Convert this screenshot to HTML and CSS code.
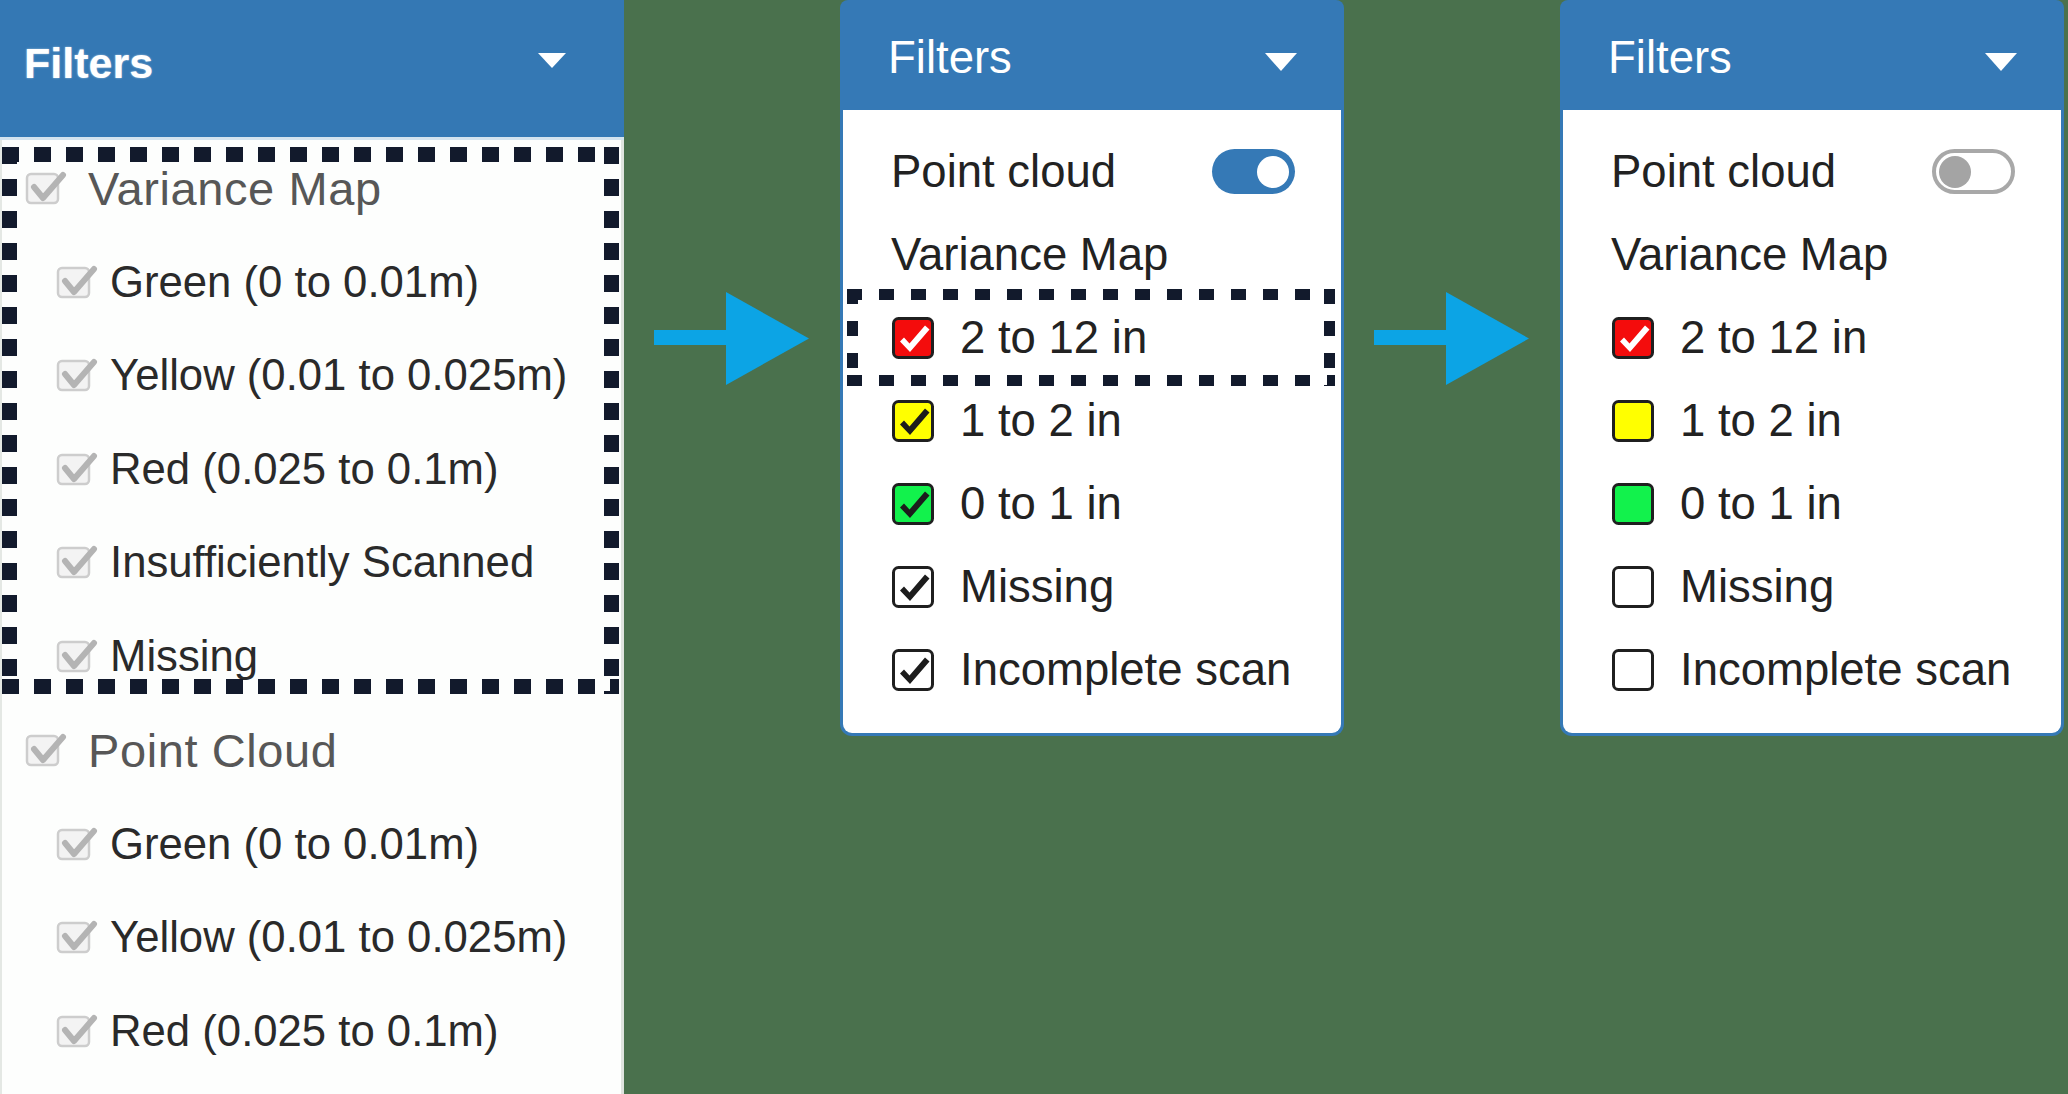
FILE: index.html
```html
<!DOCTYPE html>
<html>
<head>
<meta charset="utf-8">
<title>Filters</title>
<link rel="stylesheet" href="styles.css">
</head>
<body>
<div class="canvas">
  <aside class="old-panel">
    <div class="old-header">
      <span class="old-title">Filters</span>
      <span class="caret caret-sm"></span>
    </div>
    <div class="old-body">
      <div class="old-group dashed">
        <div class="old-row top"><svg class="gcb" viewBox="0 0 42 34"><rect class="gbox" x="2" y="3" width="31" height="29" rx="4"/><path class="gchk" d="M9 16 L18 27 L38 4"/></svg><span>Variance Map</span></div>
        <div class="old-row sub"><svg class="gcb" viewBox="0 0 42 34"><rect class="gbox" x="2" y="3" width="31" height="29" rx="4"/><path class="gchk" d="M9 16 L18 27 L38 4"/></svg><span>Green (0 to 0.01m)</span></div>
        <div class="old-row sub"><svg class="gcb" viewBox="0 0 42 34"><rect class="gbox" x="2" y="3" width="31" height="29" rx="4"/><path class="gchk" d="M9 16 L18 27 L38 4"/></svg><span>Yellow (0.01 to 0.025m)</span></div>
        <div class="old-row sub"><svg class="gcb" viewBox="0 0 42 34"><rect class="gbox" x="2" y="3" width="31" height="29" rx="4"/><path class="gchk" d="M9 16 L18 27 L38 4"/></svg><span>Red (0.025 to 0.1m)</span></div>
        <div class="old-row sub"><svg class="gcb" viewBox="0 0 42 34"><rect class="gbox" x="2" y="3" width="31" height="29" rx="4"/><path class="gchk" d="M9 16 L18 27 L38 4"/></svg><span>Insufficiently Scanned</span></div>
        <div class="old-row sub"><svg class="gcb" viewBox="0 0 42 34"><rect class="gbox" x="2" y="3" width="31" height="29" rx="4"/><path class="gchk" d="M9 16 L18 27 L38 4"/></svg><span>Missing</span></div>
      </div>
      <div class="old-group second">
        <div class="old-row top"><svg class="gcb" viewBox="0 0 42 34"><rect class="gbox" x="2" y="3" width="31" height="29" rx="4"/><path class="gchk" d="M9 16 L18 27 L38 4"/></svg><span>Point Cloud</span></div>
        <div class="old-row sub"><svg class="gcb" viewBox="0 0 42 34"><rect class="gbox" x="2" y="3" width="31" height="29" rx="4"/><path class="gchk" d="M9 16 L18 27 L38 4"/></svg><span>Green (0 to 0.01m)</span></div>
        <div class="old-row sub"><svg class="gcb" viewBox="0 0 42 34"><rect class="gbox" x="2" y="3" width="31" height="29" rx="4"/><path class="gchk" d="M9 16 L18 27 L38 4"/></svg><span>Yellow (0.01 to 0.025m)</span></div>
        <div class="old-row sub"><svg class="gcb" viewBox="0 0 42 34"><rect class="gbox" x="2" y="3" width="31" height="29" rx="4"/><path class="gchk" d="M9 16 L18 27 L38 4"/></svg><span>Red (0.025 to 0.1m)</span></div>
      </div>
    </div>
  </aside>

  <div class="arrow-slot first">
    <svg class="arrow" viewBox="0 0 156 94"><rect x="0" y="38" width="76" height="15"/><polygon points="72,0 72,93 155,46.5"/></svg>
  </div>

  <section class="panel">
    <div class="panel-header">
      <span class="panel-title">Filters</span>
      <span class="caret caret-lg"></span>
    </div>
    <div class="panel-body">
      <div class="row"><span>Point cloud</span><span class="toggle on"><span class="knob"></span></span></div>
      <div class="row"><span>Variance Map</span></div>
      <div class="row check highlight"><svg class="cb red" viewBox="0 0 42 42"><rect class="box" x="1.5" y="1.5" width="39" height="39" rx="5"/><path class="chk white" d="M8 24.5 L12 20.5 L17.5 26.5 L33 8.5 L37.5 12.5 L18 35 Z"/></svg><span>2 to 12 in</span></div>
      <div class="row check"><svg class="cb yellow" viewBox="0 0 42 42"><rect class="box" x="1.5" y="1.5" width="39" height="39" rx="5"/><path class="chk" d="M8 24.5 L12 20.5 L17.5 26.5 L33 8.5 L37.5 12.5 L18 35 Z"/></svg><span>1 to 2 in</span></div>
      <div class="row check"><svg class="cb green" viewBox="0 0 42 42"><rect class="box" x="1.5" y="1.5" width="39" height="39" rx="5"/><path class="chk" d="M8 24.5 L12 20.5 L17.5 26.5 L33 8.5 L37.5 12.5 L18 35 Z"/></svg><span>0 to 1 in</span></div>
      <div class="row check"><svg class="cb plain" viewBox="0 0 42 42"><rect class="box" x="1.5" y="1.5" width="39" height="39" rx="5"/><path class="chk" d="M8 24.5 L12 20.5 L17.5 26.5 L33 8.5 L37.5 12.5 L18 35 Z"/></svg><span>Missing</span></div>
      <div class="row check"><svg class="cb plain" viewBox="0 0 42 42"><rect class="box" x="1.5" y="1.5" width="39" height="39" rx="5"/><path class="chk" d="M8 24.5 L12 20.5 L17.5 26.5 L33 8.5 L37.5 12.5 L18 35 Z"/></svg><span>Incomplete scan</span></div>
    </div>
  </section>

  <div class="arrow-slot second">
    <svg class="arrow" viewBox="0 0 156 94"><rect x="0" y="38" width="76" height="15"/><polygon points="72,0 72,93 155,46.5"/></svg>
  </div>

  <section class="panel">
    <div class="panel-header">
      <span class="panel-title">Filters</span>
      <span class="caret caret-lg"></span>
    </div>
    <div class="panel-body">
      <div class="row"><span>Point cloud</span><span class="toggle off"><span class="knob"></span></span></div>
      <div class="row"><span>Variance Map</span></div>
      <div class="row check"><svg class="cb red" viewBox="0 0 42 42"><rect class="box" x="1.5" y="1.5" width="39" height="39" rx="5"/><path class="chk white" d="M8 24.5 L12 20.5 L17.5 26.5 L33 8.5 L37.5 12.5 L18 35 Z"/></svg><span>2 to 12 in</span></div>
      <div class="row check"><svg class="cb yellow" viewBox="0 0 42 42"><rect class="box" x="1.5" y="1.5" width="39" height="39" rx="5"/></svg><span>1 to 2 in</span></div>
      <div class="row check"><svg class="cb green" viewBox="0 0 42 42"><rect class="box" x="1.5" y="1.5" width="39" height="39" rx="5"/></svg><span>0 to 1 in</span></div>
      <div class="row check"><svg class="cb plain" viewBox="0 0 42 42"><rect class="box" x="1.5" y="1.5" width="39" height="39" rx="5"/></svg><span>Missing</span></div>
      <div class="row check"><svg class="cb plain" viewBox="0 0 42 42"><rect class="box" x="1.5" y="1.5" width="39" height="39" rx="5"/></svg><span>Incomplete scan</span></div>
    </div>
  </section>
</div>
</body>
</html>
```

FILE: styles.css
```css
html, body {
  margin: 0;
  padding: 0;
}

body {
  width: 2068px;
  height: 1094px;
  overflow: hidden;
  background: #4a714d;
  font-family: "Liberation Sans", Arial, sans-serif;
}

.canvas {
  display: flex;
  align-items: flex-start;
  height: 1094px;
}

/* ---------- old panel (left) ---------- */
.old-panel {
  flex: none;
  width: 624px;
  height: 1094px;
  background: #fdfefd;
  box-shadow: inset -3px 0 0 #dfe4df, inset 2px 0 0 #e4e8e4;
}

.old-header {
  height: 140px;
  box-sizing: border-box;
  background: #3478b4;
  border-bottom: 3px solid #d3e3ef;
  display: flex;
  align-items: flex-start;
  padding: 42px 0 0 24px;
}

.old-title {
  font-size: 43px;
  line-height: 43px;
  font-weight: bold;
  color: #fff;
  text-shadow: 0 0 2px rgba(255, 255, 255, 0.6);
}

.caret {
  width: 0;
  height: 0;
  margin-left: auto;
  border-style: solid;
  border-color: #fff transparent transparent transparent;
}

.caret-sm {
  margin-top: 11px;
  margin-right: 58px;
  border-width: 15px 14px 0 14px;
}

.old-body {
  padding-top: 7px;
}

.old-group {
  position: relative;
  margin-left: 2px;
  width: 617px;
  display: flex;
  flex-direction: column;
  gap: 33.5px;
}

.old-group.dashed {
  padding: 11px 0 8px;
}

.old-group.second {
  margin-top: 26.5px;
}

.dashed::after {
  content: "";
  position: absolute;
  inset: 0;
  pointer-events: none;
  background:
    linear-gradient(90deg, #121a2c 17px, transparent 17px) left top / 32px 15px repeat-x,
    linear-gradient(90deg, #121a2c 17px, transparent 17px) left bottom / 32px 15px repeat-x,
    linear-gradient(180deg, #121a2c 17px, transparent 17px) left top / 15px 32px repeat-y,
    linear-gradient(180deg, #121a2c 17px, transparent 17px) right top / 15px 32px repeat-y;
}

.old-row {
  height: 60px;
  display: flex;
  align-items: center;
  white-space: nowrap;
}

.old-row.top {
  padding-left: 23px;
  font-size: 47px;
  line-height: 47px;
  color: #575757;
  letter-spacing: 0.6px;
  gap: 25px;
}

.old-row.sub {
  padding-left: 54px;
  font-size: 43.7px;
  line-height: 44px;
  color: #2a2a2a;
  gap: 16px;
}

.gcb {
  width: 42px;
  height: 34px;
  flex: none;
  margin-right: -4px;
  overflow: visible;
}

.gbox {
  fill: #f3f3f3;
  stroke: #cdcdcd;
  stroke-width: 2.5;
}

.gchk {
  fill: none;
  stroke: #b4b4b4;
  stroke-width: 6;
  stroke-linecap: round;
  stroke-linejoin: round;
}

/* ---------- arrows ---------- */
.arrow-slot {
  flex: none;
  box-sizing: border-box;
  padding-top: 292px;
}

.arrow-slot.first {
  width: 216px;
  padding-left: 30px;
}

.arrow-slot.second {
  width: 216px;
  padding-left: 30px;
}

.arrow {
  display: block;
  width: 156px;
  height: 94px;
  fill: #0ca4e5;
}

/* ---------- new panels ---------- */
.panel {
  flex: none;
  width: 504px;
}

.panel-header {
  height: 110px;
  box-sizing: border-box;
  background: #3579b6;
  border-radius: 8px 8px 0 0;
  display: flex;
  align-items: flex-start;
  padding: 35px 0 0 48px;
}

.panel-title {
  font-size: 45.5px;
  line-height: 45px;
  color: #fff;
}

.caret-lg {
  margin-top: 18px;
  margin-right: 47px;
  border-width: 18px 16.5px 0 16.5px;
}

.panel-body {
  background: #fff;
  border: 3px solid #3579b6;
  border-top: 0;
  border-radius: 0 0 12px 12px;
  padding: 20px 0 22px;
}

.row {
  position: relative;
  height: 83px;
  display: flex;
  align-items: center;
  padding-left: 48px;
  font-size: 45.5px;
  line-height: 45px;
  color: #222;
  white-space: nowrap;
}

.row.check {
  padding-left: 49px;
  gap: 26px;
}

.highlight::after {
  content: "";
  position: absolute;
  top: -7px;
  bottom: -7px;
  left: 4px;
  right: 6px;
  pointer-events: none;
  background:
    linear-gradient(90deg, #121a2c 15px, transparent 15px) left top / 32px 11px repeat-x,
    linear-gradient(90deg, #121a2c 15px, transparent 15px) left bottom / 32px 11px repeat-x,
    linear-gradient(180deg, #121a2c 15px, transparent 15px) left top / 11px 32px repeat-y,
    linear-gradient(180deg, #121a2c 15px, transparent 15px) right top / 11px 32px repeat-y;
}

.cb {
  width: 42px;
  height: 42px;
  flex: none;
}

.box {
  stroke: #1f1f1f;
  stroke-width: 3;
}

.cb.red .box { fill: #f40c0c; }
.cb.yellow .box { fill: #ffff00; }
.cb.green .box { fill: #12f24c; }
.cb.plain .box { fill: #fff; }

.chk {
  fill: #1c1c1c;
}

.chk.white {
  fill: #fff;
}

.toggle {
  margin-left: auto;
  margin-right: 46px;
  width: 83px;
  height: 45px;
  box-sizing: border-box;
  border-radius: 23px;
  display: flex;
  align-items: center;
}

.toggle.on {
  background: #3579b6;
  justify-content: flex-end;
  padding-right: 6px;
}

.toggle.off {
  background: #fff;
  border: 4px solid #a8a8a8;
  padding-left: 3px;
}

.knob {
  width: 32px;
  height: 32px;
  border-radius: 50%;
}

.toggle.on .knob { background: #fff; }
.toggle.off .knob { background: #a4a4a4; }
```
